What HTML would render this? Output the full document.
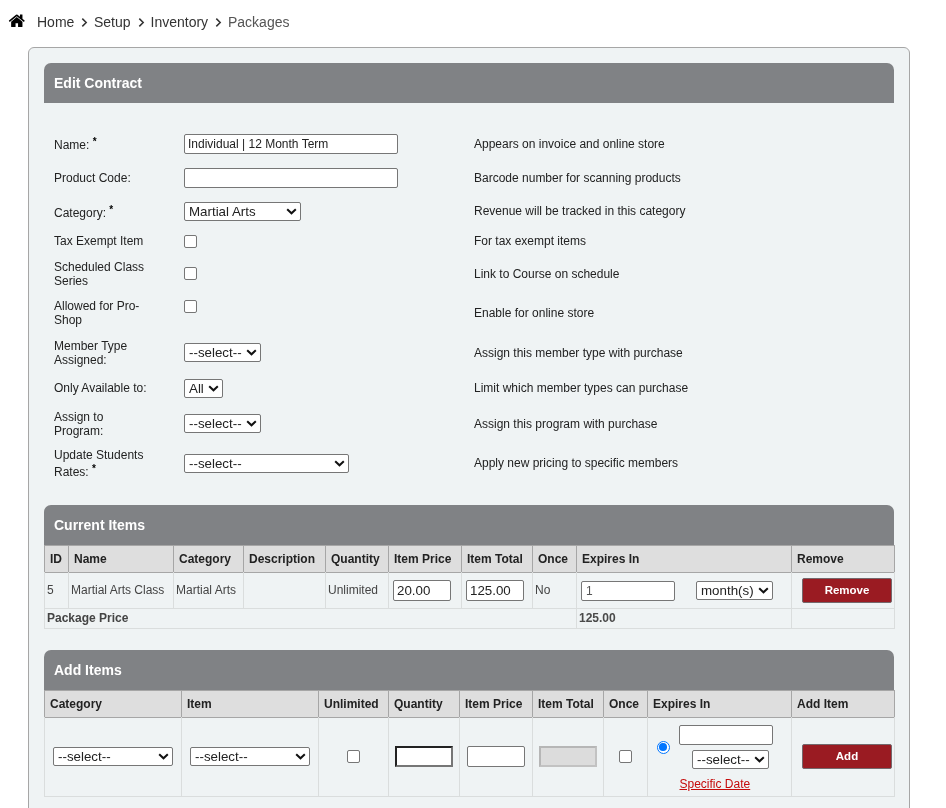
<!DOCTYPE html>
<html><head><meta charset="utf-8"><title>Packages</title>
<style>
html,body{margin:0;padding:0;background:#fff;}
body{width:946px;height:808px;overflow:hidden;position:relative;will-change:transform;font-family:"Liberation Sans",Arial,sans-serif;font-size:12px;color:#222;}
.abs{position:absolute;white-space:nowrap;}
.crumb{position:absolute;top:13px;font-size:14px;line-height:18px;color:#333;white-space:nowrap;}
.chev{position:absolute;top:17px;width:8px;height:11px;}
.panel{position:absolute;left:28px;top:47px;width:880px;height:800px;border:1px solid #a6a6a6;border-radius:6px;background:#eff3f4;}
.hdr{position:absolute;left:44px;width:850px;height:40px;background:#808285;border-radius:7px 7px 0 0;color:#fff;font-weight:bold;font-size:14px;line-height:40px;text-indent:10px;}
.lbl{position:absolute;left:54px;line-height:14px;font-size:12px;color:#222;white-space:nowrap;}
.lbl sup{font-size:10px;line-height:0;vertical-align:4.5px;font-weight:bold;color:#000;}
.desc{position:absolute;left:474px;line-height:14px;font-size:12px;color:#222;white-space:nowrap;}
.t{position:absolute;white-space:pre;overflow:hidden;box-sizing:border-box;border:1px solid #767676;border-radius:2px;background:#fff;font-family:"Liberation Sans",sans-serif;font-size:12px;padding:0 3px;margin:0;color:#222;outline:none;}
.sel{position:absolute;box-sizing:border-box;border:1px solid #767676;border-radius:2px;background:#fff;font-size:13.33px;line-height:17px;padding-left:4px;color:#222;white-space:nowrap;overflow:hidden;}
.sel svg{position:absolute;right:3.5px;top:4.5px;width:11px;height:7px;}
.cb{position:absolute;box-sizing:border-box;width:13px;height:13px;border:1px solid #767676;border-radius:2px;background:#fff;}

.th{position:absolute;box-sizing:border-box;top:545px;height:28px;background:#dedede;border:1px solid #a6a6a6;font-weight:bold;font-size:12px;line-height:14px;padding:6px 0 0 5px;color:#222;white-space:nowrap;}
.td{position:absolute;box-sizing:border-box;border:1px solid #dadddd;font-size:12px;line-height:14px;color:#444;white-space:nowrap;padding-left:2px;}
.btn{position:absolute;box-sizing:border-box;background:#9a1b22;border:1px solid #74686c;border-radius:2px;color:#fff;font-weight:bold;font-size:11.5px;text-align:center;line-height:23px;}
</style></head><body>
<svg class="abs" style="left:7.9px;top:11.6px" width="17.6" height="17.6" viewBox="0 0 1792 1792"><path fill="#000" d="M1472 992v480q0 26-19 45t-45 19h-384v-384h-256v384h-384q-26 0-45-19t-19-45v-480q0-1 .5-3t.5-3l575-474 575 474q1 2 1 6zm223-69l-62 74q-8 9-21 11h-3q-13 0-21-7l-692-577-692 577q-12 8-24 7-13-2-21-11l-62-74q-8-10-7-23.500t11-21.500l719-599q32-26 76-26t76 26l244 204v-195q0-14 9-23t23-9h192q14 0 23 9t9 23v408l219 182q10 8 11 21.500t-7 23.500z"/></svg>
<div class="crumb" style="left:37px">Home</div>
<svg class="chev" style="left:81px" viewBox="0 0 8 11"><path d="M1.3 1.6 L5.2 5.5 L1.3 9.4" fill="none" stroke="#333" stroke-width="1.5"/></svg>
<div class="crumb" style="left:94px">Setup</div>
<svg class="chev" style="left:137.5px" viewBox="0 0 8 11"><path d="M1.3 1.6 L5.2 5.5 L1.3 9.4" fill="none" stroke="#333" stroke-width="1.5"/></svg>
<div class="crumb" style="left:150.5px">Inventory</div>
<svg class="chev" style="left:215px" viewBox="0 0 8 11"><path d="M1.3 1.6 L5.2 5.5 L1.3 9.4" fill="none" stroke="#333" stroke-width="1.5"/></svg>
<div class="crumb" style="left:228px;color:#555">Packages</div>

<div class="panel"></div>
<div class="hdr" style="top:63px">Edit Contract</div>

<!-- FORM -->
<div class="lbl" style="top:138px">Name: <sup>*</sup></div>
<div class="t" style="left:184px;top:134px;width:214px;height:20px;line-height:18px">Individual | 12 Month Term</div>
<div class="desc" style="top:137px">Appears on invoice and online store</div>

<div class="lbl" style="top:171px">Product Code:</div>
<div class="t" style="left:184px;top:168px;width:214px;height:20px;line-height:18px"></div>
<div class="desc" style="top:171px">Barcode number for scanning products</div>

<div class="lbl" style="top:206px">Category: <sup>*</sup></div>
<div class="sel" style="left:184px;top:202px;width:117px;height:19px">Martial Arts<svg viewBox="0 0 11 7"><path d="M1.2 1.2 L5.5 5.3 L9.8 1.2" fill="none" stroke="#111" stroke-width="2"/></svg></div>
<div class="desc" style="top:204px">Revenue will be tracked in this category</div>

<div class="lbl" style="top:234px">Tax Exempt Item</div>
<div class="cb" style="left:184px;top:235px"></div>
<div class="desc" style="top:234px">For tax exempt items</div>

<div class="lbl" style="top:260px">Scheduled Class<br>Series</div>
<div class="cb" style="left:184px;top:267px"></div>
<div class="desc" style="top:267px">Link to Course on schedule</div>

<div class="lbl" style="top:299px">Allowed for Pro-<br>Shop</div>
<div class="cb" style="left:184px;top:300px"></div>
<div class="desc" style="top:306px">Enable for online store</div>

<div class="lbl" style="top:339px">Member Type<br>Assigned:</div>
<div class="sel" style="left:184px;top:343px;width:77px;height:19px">--select--<svg viewBox="0 0 11 7"><path d="M1.2 1.2 L5.5 5.3 L9.8 1.2" fill="none" stroke="#111" stroke-width="2"/></svg></div>
<div class="desc" style="top:346px">Assign this member type with purchase</div>

<div class="lbl" style="top:381px">Only Available to:</div>
<div class="sel" style="left:184px;top:379px;width:39px;height:19px">All<svg viewBox="0 0 11 7"><path d="M1.2 1.2 L5.5 5.3 L9.8 1.2" fill="none" stroke="#111" stroke-width="2"/></svg></div>
<div class="desc" style="top:381px">Limit which member types can purchase</div>

<div class="lbl" style="top:410px">Assign to<br>Program:</div>
<div class="sel" style="left:184px;top:414px;width:77px;height:19px">--select--<svg viewBox="0 0 11 7"><path d="M1.2 1.2 L5.5 5.3 L9.8 1.2" fill="none" stroke="#111" stroke-width="2"/></svg></div>
<div class="desc" style="top:417px">Assign this program with purchase</div>

<div class="lbl" style="top:448px">Update Students</div>
<div class="lbl" style="top:465px">Rates: <sup>*</sup></div>
<div class="sel" style="left:184px;top:454px;width:165px;height:19px">--select--<svg viewBox="0 0 11 7"><path d="M1.2 1.2 L5.5 5.3 L9.8 1.2" fill="none" stroke="#111" stroke-width="2"/></svg></div>
<div class="desc" style="top:456px">Apply new pricing to specific members</div>

<!-- CURRENT ITEMS -->
<div class="hdr" style="top:505px">Current Items</div>
<div class="th" style="left:44px;width:25px">ID</div>
<div class="th" style="left:68px;width:106px">Name</div>
<div class="th" style="left:173px;width:71px">Category</div>
<div class="th" style="left:243px;width:83px">Description</div>
<div class="th" style="left:325px;width:64px">Quantity</div>
<div class="th" style="left:388px;width:74px">Item Price</div>
<div class="th" style="left:461px;width:72px">Item Total</div>
<div class="th" style="left:532px;width:45px">Once</div>
<div class="th" style="left:576px;width:216px">Expires In</div>
<div class="th" style="left:791px;width:104px">Remove</div>
<div class="td" style="left:44px;top:572px;width:25px;height:37px;padding-top:11px;border-top:none">5</div>
<div class="td" style="left:68px;top:572px;width:106px;height:37px;padding-top:11px;border-top:none">Martial Arts Class</div>
<div class="td" style="left:173px;top:572px;width:71px;height:37px;padding-top:11px;border-top:none">Martial Arts</div>
<div class="td" style="left:243px;top:572px;width:83px;height:37px;padding-top:11px;border-top:none"></div>
<div class="td" style="left:325px;top:572px;width:64px;height:37px;padding-top:11px;border-top:none">Unlimited</div>
<div class="td" style="left:388px;top:572px;width:74px;height:37px;padding-top:11px;border-top:none"></div>
<div class="td" style="left:461px;top:572px;width:72px;height:37px;padding-top:11px;border-top:none"></div>
<div class="td" style="left:532px;top:572px;width:45px;height:37px;padding-top:11px;border-top:none">No</div>
<div class="td" style="left:576px;top:572px;width:216px;height:37px;padding-top:11px;border-top:none"></div>
<div class="td" style="left:791px;top:572px;width:104px;height:37px;padding-top:11px;border-top:none"></div>
<div class="td" style="left:44px;top:608px;width:533px;height:21px;padding-top:2px;font-weight:bold;color:#444">Package Price</div>
<div class="td" style="left:576px;top:608px;width:216px;height:21px;padding-top:2px;font-weight:bold;color:#4a4a4a">125.00</div>
<div class="td" style="left:791px;top:608px;width:104px;height:21px"></div>
<div class="t" style="left:393px;top:580px;width:58px;height:21px;font-size:13.33px;padding:0 3px;line-height:19px">20.00</div>
<div class="t" style="left:466px;top:580px;width:58px;height:21px;font-size:13.33px;padding:0 3px;line-height:19px">125.00</div>
<div class="t" style="left:581px;top:581px;width:94px;height:20px;color:#555;padding:0 4px;line-height:18px">1</div>
<div class="sel" style="left:696px;top:581px;width:77px;height:19px">month(s)<svg viewBox="0 0 11 7"><path d="M1.2 1.2 L5.5 5.3 L9.8 1.2" fill="none" stroke="#111" stroke-width="2"/></svg></div>
<div class="btn" style="left:802px;top:578px;width:90px;height:25px">Remove</div>

<!-- ADD ITEMS -->
<div class="hdr" style="top:650px">Add Items</div>
<div class="th" style="top:690px;left:44px;width:138px">Category</div>
<div class="th" style="top:690px;left:181px;width:138px">Item</div>
<div class="th" style="top:690px;left:318px;width:71px">Unlimited</div>
<div class="th" style="top:690px;left:388px;width:72px">Quantity</div>
<div class="th" style="top:690px;left:459px;width:74px">Item Price</div>
<div class="th" style="top:690px;left:532px;width:72px">Item Total</div>
<div class="th" style="top:690px;left:603px;width:45px">Once</div>
<div class="th" style="top:690px;left:647px;width:145px">Expires In</div>
<div class="th" style="top:690px;left:791px;width:104px">Add Item</div>
<div class="td" style="left:44px;top:717px;width:138px;height:80px;border-top:none"></div>
<div class="td" style="left:181px;top:717px;width:138px;height:80px;border-top:none"></div>
<div class="td" style="left:318px;top:717px;width:71px;height:80px;border-top:none"></div>
<div class="td" style="left:388px;top:717px;width:72px;height:80px;border-top:none"></div>
<div class="td" style="left:459px;top:717px;width:74px;height:80px;border-top:none"></div>
<div class="td" style="left:532px;top:717px;width:72px;height:80px;border-top:none"></div>
<div class="td" style="left:603px;top:717px;width:45px;height:80px;border-top:none"></div>
<div class="td" style="left:647px;top:717px;width:145px;height:80px;border-top:none"></div>
<div class="td" style="left:791px;top:717px;width:104px;height:80px;border-top:none"></div>
<div class="sel" style="left:53px;top:747px;width:120px;height:19px">--select--<svg viewBox="0 0 11 7"><path d="M1.2 1.2 L5.5 5.3 L9.8 1.2" fill="none" stroke="#111" stroke-width="2"/></svg></div>
<div class="sel" style="left:190px;top:747px;width:120px;height:19px">--select--<svg viewBox="0 0 11 7"><path d="M1.2 1.2 L5.5 5.3 L9.8 1.2" fill="none" stroke="#111" stroke-width="2"/></svg></div>
<div class="cb" style="left:347px;top:750px"></div>
<div class="t" style="left:395px;top:746px;width:58px;height:21px;border:2px solid;border-color:#222 #767676 #767676 #222;border-radius:0;line-height:17px"></div>
<div class="t" style="left:467px;top:746px;width:58px;height:21px;line-height:19px"></div>
<div class="abs" style="left:539px;top:746px;width:58px;height:21px;box-sizing:border-box;border:2px solid;border-color:#b6b6b6 #c2c2c2 #c2c2c2 #b6b6b6;background:#dcdcdc"></div>
<div class="cb" style="left:619px;top:750px"></div>
<div class="abs" style="left:657px;top:741px;width:13px;height:13px;box-sizing:border-box;border:1.5px solid #0075ff;border-radius:50%;background:#fff"><div style="position:absolute;left:1.2px;top:1.2px;width:7.6px;height:7.6px;border-radius:50%;background:#0075ff"></div></div>
<div class="t" style="left:679px;top:725px;width:94px;height:20px;line-height:18px"></div>
<div class="sel" style="left:692px;top:750px;width:77px;height:19px">--select--<svg viewBox="0 0 11 7"><path d="M1.2 1.2 L5.5 5.3 L9.8 1.2" fill="none" stroke="#111" stroke-width="2"/></svg></div>
<div class="abs" style="left:679.5px;top:777px;font-size:12px;line-height:14px;color:#c50b0b;text-decoration:underline">Specific Date</div>
<div class="btn" style="left:802px;top:744px;width:90px;height:25px">Add</div>
</body></html>
